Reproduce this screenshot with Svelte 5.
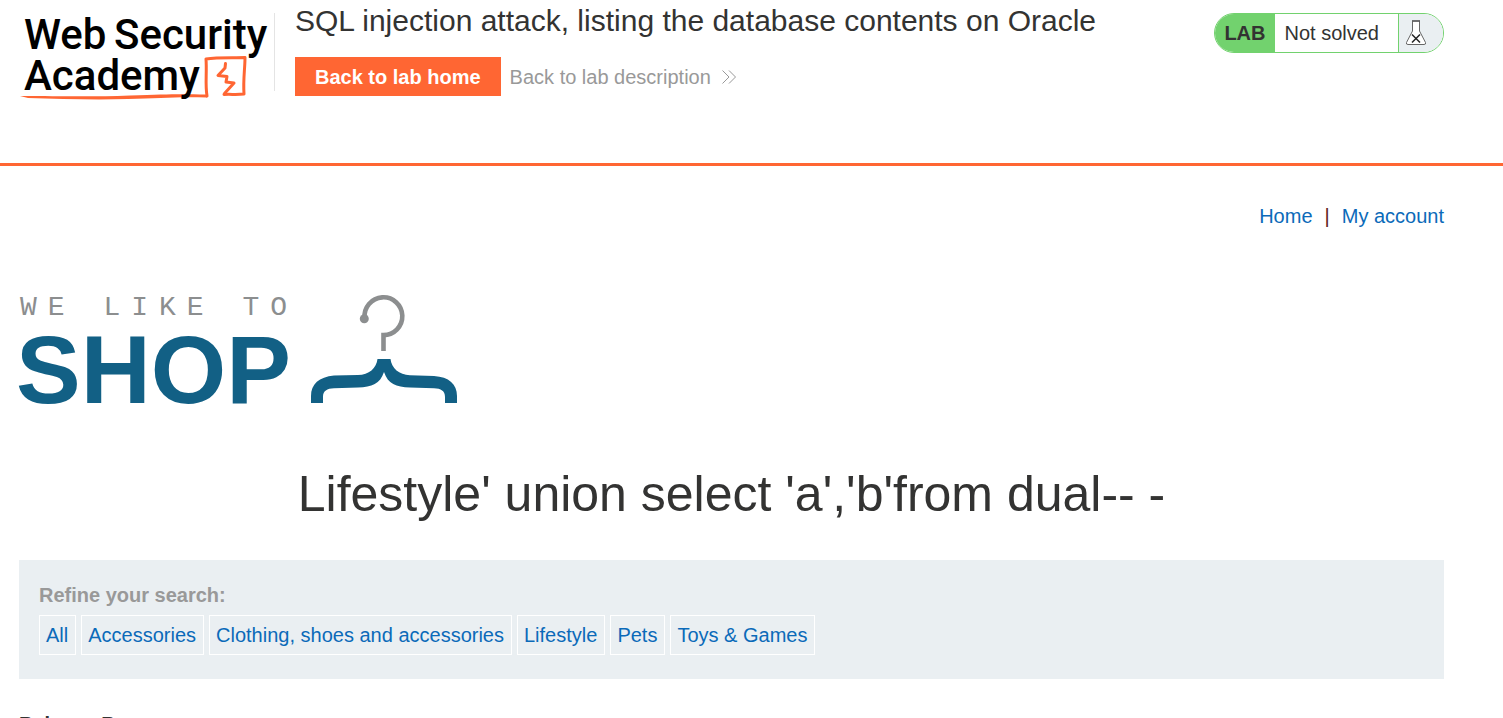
<script>
  const title = 'SQL injection attack, listing the database contents on Oracle';
  const query = "Lifestyle' union select 'a','b'from dual-- -";
  const categories = ['All', 'Accessories', 'Clothing, shoes and accessories', 'Lifestyle', 'Pets', 'Toys & Games'];
  const products = ['Balance Beams'];
</script>

<header>
  <div class="bar">
    <a class="academy" href="#academy" aria-label="Web Security Academy">
      <svg width="255" height="96" viewBox="19 8 255 96">
        <path d="M20 96 C60 96 90 97 130 95.500 S180 94 207 94.500 L207 97.500 C180 96.500 160 98 128 99 S60 99 28 98 Z" fill="#f63" />
        <path d="M207 96 C205 84 207 73 206 59 C218 57 233 58 245 57.500 C245 69 243 79 244 94 C236 95 231 94 224 94.500" fill="none" stroke="#f63" stroke-width="3" stroke-linejoin="round" stroke-linecap="round" />
        <path d="M225.500 63.500 L225 68 L218 75.500 L227 76.500 L226 82 L234 83 L224.500 93.500" fill="none" stroke="#f63" stroke-width="3" stroke-linejoin="round" stroke-linecap="round" />
        <g class="wordmark">
          <text x="24" y="49">Web</text>
          <text x="114" y="49">Security</text>
          <text x="24" y="90">Academy</text>
        </g>
      </svg>
    </a>
    <div class="heading">
      <h2>{title}</h2>
      <div class="actions">
        <a class="button" href="#lab">Back to lab home</a>
        <a class="back" href="#description">
          Back to lab description
          <svg width="16" height="16" viewBox="0 0 16 16" fill="none" stroke="#999" stroke-width="1">
            <path d="M1.500 1.500 8 8 1.500 14.500M8 1.500 14.500 8 8 14.500" />
          </svg>
        </a>
      </div>
    </div>
    <div class="status">
      <strong>LAB</strong>
      <span>Not solved</span>
      <div class="flask">
        <svg width="22" height="26" viewBox="0 0 22 26">
          <path d="M7.500 1.500 V11 L1.500 22.500 Q.8 24.500 3 24.500 H19 Q21.200 24.500 20.500 22.500 L14.500 11 V1.500" fill="#fff" stroke="#666" />
          <path d="M7 1 H15" stroke="#444" stroke-width="1.500" />
          <path d="M7 14.500 15 22.500M15 14.500 7 22.500" stroke="#222" stroke-width="1.500" />
        </svg>
      </div>
    </div>
  </div>
</header>

<main>
  <nav>
    <a href="#home">Home</a><span>|</span><a href="#account">My account</a>
  </nav>

  <svg class="shop" width="440" height="116" viewBox="19 292 440 116" role="img" aria-label="We like to shop">
    <text class="tagline" x="20" y="315">WE LIKE TO</text>
    <text class="name" x="16" y="403">SHOP</text>
    <path d="M364.600 318 A18.900 18.900 0 1 1 383.500 335.100 V351" fill="none" stroke="#8c8e8f" stroke-width="4.600" />
    <circle cx="364.300" cy="318.700" r="4.500" fill="#8c8e8f" />
    <path d="M377.500 359 H390.500 C391.500 368 399 375 410 375.200 L434 376 C449 377 457 384 457 396 V403 H445 V397 C445 391 441 388.500 434 388.300 L410 387.500 C396 387 388 384 384 372 C380 384 372 387 358 387.500 L334 388.300 C327 388.500 323 391 323 397 V403 H311 V396 C311 384 319 377 334 375.500 L358 375 C369 375 376.500 368 377.500 359 Z" fill="#126085" />
  </svg>

  <h1>{query}</h1>

  <section class="filters">
    <strong>Refine your search:</strong>
    <ul>
      {#each categories as category}
        <li><a href="#filter">{category}</a></li>
      {/each}
    </ul>
  </section>

  <table>
    <tbody>
      {#each products as product}
        <tr><th scope="row">{product}</th></tr>
      {/each}
    </tbody>
  </table>
</main>

<style>
  :global(html) { scrollbar-width: none; }
  :global(body) {
    margin: 0;
    background: #fff;
    color: #333332;
    font: 20px/24px "Liberation Sans", Arial, sans-serif;
  }
  a { color: #0b6ab9; text-decoration: none; }
  h1, h2 { margin: 0; font-weight: 400; }
  header {
    box-sizing: border-box;
    min-height: 166px;
    padding: 4px 59px 0 19px;
    border-bottom: 3px solid #f63;
  }
  .bar { display: flex; align-items: flex-start; }
  .academy {
    display: flex;
    flex: none;
    width: 256px;
    padding-top: 4px;
    background: linear-gradient(#e4e4e4, #e4e4e4) right 9px / 1px 78px no-repeat;
  }
  .academy svg, .shop { overflow: visible; }
  .wordmark { font: 500 42px Roboto, sans-serif; fill: #000; }
  .heading { flex: 1; padding-left: 20px; }
  h2 { font-size: 30px; line-height: 34px; }
  .actions { display: flex; align-items: center; gap: 9px; margin-top: 19px; }
  .button {
    padding: 8px 20px 7px;
    background: #f63;
    color: #fff;
    font-weight: 700;
  }
  .back { display: flex; align-items: center; gap: 10px; color: #999; }
  .status {
    box-sizing: border-box;
    display: flex;
    flex: none;
    height: 40px;
    margin-top: 9px;
    border: 1px solid #72d26e;
    border-radius: 20px;
    overflow: hidden;
    line-height: 38px;
  }
  .status strong { padding: 0 9px; background: #72d26e; }
  .status span { padding: 0 19px 0 10px; }
  .flask {
    display: flex;
    align-items: center;
    padding: 0 16px 0 6px;
    border-left: 1px solid #72d26e;
    background: #eaeff2;
  }
  main { padding: 38px 59px 0 19px; }
  nav { display: flex; justify-content: flex-end; color: #602020; }
  nav span { padding: 0 12px; }
  .shop { display: block; margin-top: 64px; }
  .tagline {
    font: 28px "Liberation Mono", monospace;
    letter-spacing: 11px;
    fill: #8c8e8f;
  }
  .name { font: 700 97px "Liberation Sans", Arial, sans-serif; fill: #126085; }
  h1 { margin-top: 56px; font-size: 50px; line-height: 60px; text-align: center; }
  .filters { margin-top: 36px; padding: 23px 20px 24px; background: #eaeff2; color: #999; }
  .filters strong { display: block; }
  ul { display: flex; flex-wrap: wrap; gap: 5px; margin: 8px 0 0; padding: 0; list-style: none; }
  li a { display: block; padding: 7px 7px 7px 6px; border: 1px solid #fff; }
  table { margin-top: 33px; border-collapse: collapse; }
  th { padding: 0; text-align: left; }
</style>
